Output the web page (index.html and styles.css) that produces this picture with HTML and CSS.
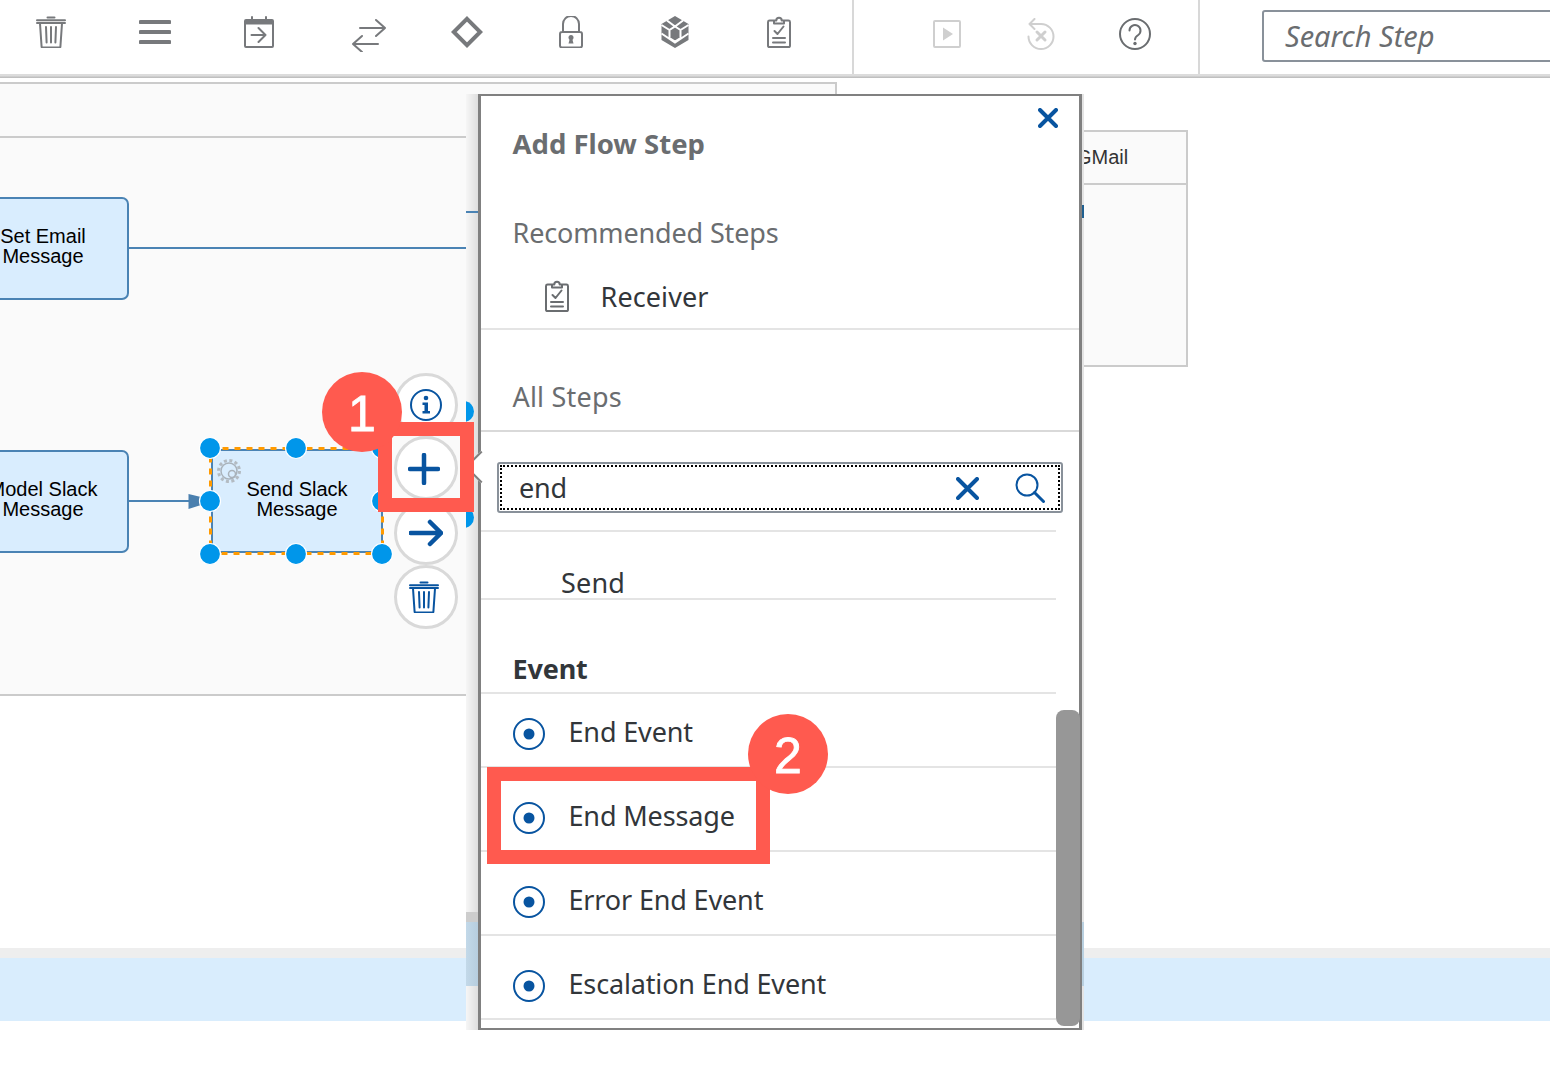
FILE: index.html
```html
<!DOCTYPE html>
<html lang="en">
<head>
<meta charset="utf-8">
<title>Add Flow Step</title>
<link rel="stylesheet" href="styles.css">
</head>
<body>
<svg class="defs" width="0" height="0" aria-hidden="true">
  <symbol id="i-trash" viewBox="0 0 32 32">
    <path class="ln" d="M12.5 1.6h7M2 4.200h28M2 7h28M5 7.500l1.600 23.300a.8.8 0 0 0 .8.700h17.200a.8.8 0 0 0 .8-.7L27 7.500M11 11l.6 15.500M16 11v15.500M21 11l-.6 15.500"/>
  </symbol>
  <symbol id="i-clip" viewBox="0 0 24 32">
    <path class="ln" d="M7 4.500H2.600A1.600 1.600 0 0 0 1 6v23.400A1.600 1.600 0 0 0 2.600 31h18.800a1.600 1.600 0 0 0 1.600-1.600V6a1.600 1.600 0 0 0-1.600-1.500H17M7 7.500h10v-3h-2.300a2.700 2.700 0 0 0-5.400 0H7zM7.500 15l3 3 6-7.500M6 22h12M6 26.500h12"/>
  </symbol>
  <symbol id="i-radio" viewBox="0 0 32 32">
    <circle class="ln" cx="16" cy="16" r="15"/>
    <circle class="fl" cx="16" cy="16" r="5.500"/>
  </symbol>
</svg>

<div class="page">
  <header class="toolbar">
    <div class="tools tools-a">
      <span class="tool"><svg class="ico" width="32" height="32"><use href="#i-trash"/></svg></span>
      <span class="tool"><svg class="ico" width="32" height="32" viewBox="0 0 32 32"><path class="bars" d="M1.500 6h29M1.500 16h29M1.500 26h29"/></svg></span>
      <span class="tool"><svg class="ico" width="32" height="32" viewBox="0 0 32 32"><path class="ln" d="M3 4h26a1 1 0 0 1 1 1v25a1 1 0 0 1-1 1H3a1 1 0 0 1-1-1V5a1 1 0 0 1 1-1zM8.500 19h14M15.500 12l7 7-7 7"/><path class="fl" d="M3 4h26v4.500H3z"/><path class="ln" d="M9 1v3M23 1v3"/></svg></span>
      <span class="tool tool-swap"><svg class="ico" width="34" height="36" viewBox="0 0 34 36"><path class="ln" d="M8 12h25M24 4l9 8-9 8M26 28H1M10 20l-9 8 9 8"/></svg></span>
      <span class="tool"><svg class="ico" width="32" height="32" viewBox="0 0 32 32"><path class="ln thick" d="M16 2.800 29.200 16 16 29.200 2.800 16z"/></svg></span>
      <span class="tool"><svg class="ico" width="32" height="32" viewBox="0 0 32 32"><path class="ln" d="M8 16V8a8 8 0 0 1 16 0v8M7 16h18a2 2 0 0 1 2 2v11.500a2 2 0 0 1-2 2H7a2 2 0 0 1-2-2V18a2 2 0 0 1 2-2z"/><circle class="fl" cx="16" cy="21.500" r="2.500"/><path class="fl" d="M15 22h2l1.500 5.500h-5z"/></svg></span>
      <span class="tool"><svg class="ico" width="32" height="32" viewBox="0 0 32 32"><path class="fl" d="M16 0 29.500 8v16L16 32 2.500 24V8z"/><path class="cut" d="M8 4.500 16 10.500 24 4.500M16 10.500l5.500 3.500v8L16 25.500 10.500 22v-8zM2.500 17.500l13.500 9 13.500-9M2.500 9l8 5M29.500 9l-8 5"/></svg></span>
      <span class="tool"><svg class="ico" width="24" height="32"><use href="#i-clip"/></svg></span>
    </div>
    <div class="tools tools-b">
      <span class="tool-b"><svg class="ico off" width="28" height="30" viewBox="0 0 28 30"><path class="ln" d="M2 3h24a1 1 0 0 1 1 1v24a1 1 0 0 1-1 1H2a1 1 0 0 1-1-1V4a1 1 0 0 1 1-1z"/><path class="fl" d="M10 9.500 20 16 10 22.500z"/></svg></span>
      <span class="tool-b"><svg class="ico off" width="28" height="32" viewBox="0 0 28 32"><path class="ln" d="M7.500 1 2.500 6l5 5M2.500 6H14a12.500 12.500 0 1 1-12.500 12.500"/><path class="ln thick3" d="m10 14 8 8M18 14l-8 8"/></svg></span>
      <span class="tool-b"><svg class="ico help" width="32" height="32" viewBox="0 0 32 32"><circle class="ln" cx="16" cy="16" r="15"/><path class="ln" d="M10.500 12.500a5.500 5.500 0 1 1 8.700 4.500c-2.200 1.500-3.200 2.300-3.200 4.500"/><circle class="fl" cx="16" cy="25.500" r="1.700"/></svg></span>
    </div>
    <div class="search-step">Search Step</div>
  </header>
  <div class="toolbar-rule"></div>

  <main class="stage">
    <div class="pool"><div class="pool-head"></div></div>
    <div class="gmail-pool"><div class="gmail-head">GMail</div></div>

    <div class="node node-email">Set Email<br>Message</div>
    <div class="node node-model">Model Slack<br>Message</div>
    <div class="node node-send">Send Slack<br>Message</div>

    <svg class="wires" width="1550" height="870" viewBox="0 78 1550 870">
      <path class="wire" d="M128 248H466M128 501H192"/>
      <path class="wire-head" d="M188.500 494 201 497v8l-12.500 4z"/>
      <rect class="sel" x="210.500" y="448.500" width="172" height="105"/>
      <g class="gear">
        <circle class="teeth" cx="229" cy="471" r="10.500"/>
        <circle class="gear-ring" cx="229" cy="471" r="8"/>
        <circle class="gear-ring" cx="232" cy="474" r="3.500"/>
      </g>
      <g class="handles">
        <circle cx="210" cy="448" r="10.500"/><circle cx="296" cy="448" r="10.500"/><circle cx="382" cy="448" r="10.500"/>
        <circle cx="210" cy="501" r="10.500"/><circle cx="382" cy="501" r="10.500"/>
        <circle cx="210" cy="554" r="10.500"/><circle cx="296" cy="554" r="10.500"/><circle cx="382" cy="554" r="10.500"/>
      </g>
    </svg>

    <button class="act act-info" type="button"><svg width="32" height="32" viewBox="0 0 32 32"><circle class="ln" cx="16" cy="16" r="15"/><circle class="fl" cx="16" cy="9" r="2.300"/><path class="fl" d="M12.500 13.500H18V22h2v2.500h-7.500V22h2v-6h-2z"/></svg></button>
    <button class="act act-add" type="button"><svg width="32" height="32" viewBox="0 0 32 32"><path class="ln thick" d="M16 2v28M2 16h28"/></svg></button>
    <button class="act act-next" type="button"><svg width="34" height="32" viewBox="0 0 34 32"><path class="ln thick" d="M1.500 16H31M21 5l11 11-11 11"/></svg></button>
    <button class="act act-del" type="button"><svg width="32" height="32"><use href="#i-trash"/></svg></button>
  </main>

  <div class="band-top"></div>
  <div class="band-blue"></div>

  <div class="shade-left">
    <i class="shade-line"></i>
    <i class="shade-dot shade-dot-a"></i>
    <i class="shade-dot shade-dot-b"></i>
    <i class="shade-gray"></i>
    <i class="shade-blue"></i>
  </div>
  <div class="shade-right">
    <i class="shade-mark"></i>
    <i class="shade-blue-r"></i>
  </div>

  <section class="popover">
    <span class="notch"></span>
    <div class="pop-body">
      <h2 class="pop-title">Add Flow Step</h2>
      <h3 class="pop-sub pop-rec">Recommended Steps</h3>
      <div class="rec-row">
        <svg class="ico rec-ico" width="24" height="32"><use href="#i-clip"/></svg>
        <span>Receiver</span>
      </div>
      <h3 class="pop-sub pop-all">All Steps</h3>
      <div class="pop-search">
        <div class="pop-search-in">
          <span class="pop-query">end</span>
          <svg class="blue" width="23" height="23" viewBox="0 0 23 23"><path class="ln thick" d="m2 2 19 19M21 2 2 21"/></svg>
          <svg class="blue" width="30" height="30" viewBox="0 0 30 30"><circle class="ln" cx="12" cy="12" r="10.500"/><path class="ln thick3" d="m19.500 19.500 9 9"/></svg>
        </div>
      </div>
      <div class="send-row">Send</div>
      <div class="event-head">Event</div>
      <ul class="steps">
        <li class="step step-first"><svg class="blue" width="32" height="32"><use href="#i-radio"/></svg><span>End Event</span></li>
        <li class="step"><svg class="blue" width="32" height="32"><use href="#i-radio"/></svg><span>End Message</span></li>
        <li class="step"><svg class="blue" width="32" height="32"><use href="#i-radio"/></svg><span>Error End Event</span></li>
        <li class="step"><svg class="blue" width="32" height="32"><use href="#i-radio"/></svg><span>Escalation End Event</span></li>
      </ul>
    </div>
    <button class="pop-close" type="button"><svg class="blue" width="20" height="20" viewBox="0 0 20 20"><path class="ln thick" d="m2 2 16 16M18 2 2 18"/></svg></button>
    <div class="pop-thumb"></div>
  </section>

  <div class="mark-box mark-box-1"></div>
  <div class="mark-box mark-box-2"></div>
  <div class="badge badge-1">1</div>
  <div class="badge badge-2">2</div>
</div>
</body>
</html>
```
FILE: styles.css
```css
* { box-sizing: border-box; }
html, body { margin: 0; padding: 0; background: #fff; }
.defs { position: absolute; }
.page {
  position: relative;
  width: 1550px;
  height: 1074px;
  overflow: hidden;
  font-family: "Noto Sans", "Open Sans", sans-serif;
  color: #32363a;
}

/* shared svg paint */
.ln { fill: none; stroke: currentColor; stroke-width: 2; stroke-linecap: round; stroke-linejoin: round; }
.ln.thick { stroke-width: 4; stroke-linejoin: miter; }
.ln.thick3 { stroke-width: 3; }
.fl { fill: currentColor; stroke: none; }
.ico { color: #77797c; display: block; }
.ico.off { color: #cfcfcf; }
.ico.help { color: #6a6d70; }
.blue { color: #0854a0; display: block; }
.bars { fill: none; stroke: currentColor; stroke-width: 4; stroke-linecap: round; }
.cut { fill: none; stroke: #fff; stroke-width: 2; stroke-linejoin: miter; }

/* toolbar */
.toolbar { display: flex; height: 74px; align-items: stretch; }
.tools { flex: none; display: flex; padding-top: 16px; border-right: 2px solid #d8d8d8; }
.tools-a { width: 855px; margin-left: -1px; }
.tools-b { width: 346px; padding-left: 46px; padding-top: 18px; }
.tool { flex: none; width: 104px; display: flex; justify-content: center; }
.tool-swap { padding-left: 11px; }
.tool-b { flex: none; width: 94px; display: flex; justify-content: center; }
.search-step {
  flex: none;
  width: 420px;
  height: 52px;
  margin: 10px 0 0 62px;
  padding-left: 21px;
  border: 2px solid #89919a;
  border-radius: 3px;
  font-size: 29px;
  font-style: italic;
  line-height: 48px;
  color: #6a6d70;
}
.toolbar-rule { height: 4px; background: linear-gradient(#dcdcdc, #dcdcdc 40%, #b8b8b8); }

/* diagram */
.stage { position: relative; height: 870px; background: #fff; }
.pool {
  position: absolute;
  left: -2px;
  top: 4px;
  width: 839px;
  height: 614px;
  background: #fafafa;
  border: 2px solid #cbcbcb;
}
.pool-head { height: 54px; border-bottom: 2px solid #cbcbcb; }
.gmail-pool {
  position: absolute;
  left: 1000px;
  top: 52px;
  width: 188px;
  height: 237px;
  background: #fafafa;
  border: 2px solid #cbcbcb;
}
.gmail-head {
  height: 53px;
  padding: 13px 0 0 74px;
  border-bottom: 2px solid #cbcbcb;
  font: 20px/24px "Liberation Sans", Arial, sans-serif;
  color: #333;
}
.node {
  position: absolute;
  display: flex;
  align-items: center;
  justify-content: center;
  padding-bottom: 5px;
  text-align: center;
  background: #d9edfe;
  border: 2px solid #4a83b4;
  border-radius: 7px;
  font: 20px/20px "Liberation Sans", Arial, sans-serif;
  color: #000;
}
.node-email { left: -43px; top: 119px; width: 172px; height: 103px; }
.node-model { left: -43px; top: 372px; width: 172px; height: 103px; }
.node-send { left: 211px; top: 371px; width: 172px; height: 104px; border-radius: 2px; }
.wires { position: absolute; left: 0; top: 0; pointer-events: none; }
.wire { fill: none; stroke: #4a83b4; stroke-width: 2; }
.wire-head { fill: #4a7fae; }
.sel { fill: none; stroke: #ff9a00; stroke-width: 3; stroke-dasharray: 6 6; }
.handles circle { fill: #0096ea; stroke: #fff; stroke-width: 1.200; }
.teeth { fill: none; stroke: #b3bbc2; stroke-width: 3; stroke-dasharray: 3 2.500; }
.gear-ring { fill: none; stroke: #a9b2ba; stroke-width: 1.500; }

.act {
  position: absolute;
  left: 394px;
  width: 64px;
  height: 64px;
  padding: 0;
  display: flex;
  align-items: center;
  justify-content: center;
  background: #fff;
  border: 3px solid #d9d9d9;
  border-radius: 50%;
  color: #0854a0;
}
.act-info { top: 295px; }
.act-add { top: 358px; padding: 2px 4px 0 0; }
.act-add .ln.thick { stroke-width: 4.500; }
.act-next { top: 423px; }
.act-del { top: 487px; padding-right: 4px; }
.act-next .ln.thick { stroke-width: 4.500; }

/* bottom bands */
.band-top { height: 10px; background: #eeeeee; }
.band-blue { height: 63px; background: #d9edfd; }

/* popover shadow slivers */
.shade-left {
  position: absolute;
  left: 466px;
  top: 94px;
  width: 13px;
  height: 936px;
  overflow: hidden;
  background: linear-gradient(90deg, #f6f6f6, #dcdcdc);
}
.shade-left i, .shade-right i { position: absolute; display: block; }
.shade-line { left: 0; top: 117px; width: 13px; height: 2px; background: #4a83b4; }
.shade-dot { left: -13px; width: 21px; height: 21px; border-radius: 50%; background: #0096ea; }
.shade-dot-a { top: 307px; }
.shade-dot-b { top: 413px; }
.shade-gray { left: 0; top: 818px; width: 13px; height: 10px; background: #cdcdcd; }
.shade-blue { left: 0; top: 828px; width: 13px; height: 64px; background: linear-gradient(90deg, #c3d9e9, #b5ccdd); }
.shade-right { position: absolute; left: 1082px; top: 94px; width: 2px; height: 936px; background: #e4e4e4; }
.shade-mark { left: 0; top: 111px; width: 2px; height: 13px; background: #1f5f90; }
.shade-blue-r { left: 0; top: 828px; width: 2px; height: 64px; background: #b9d0e0; }

/* popover */
.popover {
  position: absolute;
  left: 478px;
  top: 94px;
  width: 604px;
  height: 936px;
  background: #fff;
  border: solid #808080;
  border-width: 2px 3px;
}
.notch {
  position: absolute;
  left: -16px;
  top: 355px;
  width: 32px;
  height: 32px;
  transform: rotate(45deg) scale(.72);
  background: #fff;
  border-left: 3px solid #808080;
  border-bottom: 3px solid #808080;
}
.pop-body { position: relative; height: 100%; overflow: hidden; font-size: 27px; letter-spacing: -.15px; }
.pop-title, .pop-sub { margin: 0; padding-left: 31.500px; line-height: 40px; }
.pop-title { padding-top: 28px; height: 69px; font-size: 27.500px; letter-spacing: 0; font-weight: 700; color: #6a6d70; }
.pop-sub { font-weight: 400; font-size: 27px; color: #6a6d70; }
.pop-rec { margin-top: 48px; }
.rec-row {
  display: flex;
  gap: 31.500px;
  padding: 27px 0 15px 64px;
  line-height: 32px;
  letter-spacing: .1px;
  border-bottom: 2px solid #e4e4e4;
}
.rec-row span { padding-top: 1px; }
.rec-ico { color: #6a6d70; flex: none; }
.pop-all { margin-top: 47px; padding-bottom: 13px; height: 55px; letter-spacing: .2px; border-bottom: 2px solid #d9d9d9; }
.pop-search {
  margin: 30px 0 17px 16px;
  width: 566px;
  height: 51px;
  border: 2px solid #89919a;
  border-radius: 3px;
  padding: 1px;
}
.pop-search-in {
  display: flex;
  align-items: center;
  height: 100%;
  padding: 1px 13px 0 17px;
  border: 2px dotted #000;
}
.pop-query { flex: 1; line-height: 40px; }
.pop-search-in svg + svg { margin-left: 36px; }
.send-row {
  display: flex;
  align-items: flex-end;
  width: 575px;
  height: 70px;
  padding-left: 80px;
  line-height: 30px;
  letter-spacing: .2px;
  border-top: 2px solid #e4e4e4;
  border-bottom: 2px solid #e4e4e4;
}
.event-head {
  width: 575px;
  height: 94px;
  padding: 49px 0 0 31.500px;
  line-height: 40px;
  font-weight: 700;
  border-bottom: 2px solid #e4e4e4;
}
.steps { list-style: none; margin: 0; padding: 0; width: 575px; }
.step {
  display: flex;
  align-items: flex-end;
  gap: 23.500px;
  height: 84px;
  padding: 0 0 16px 32px;
  border-bottom: 2px solid #e4e4e4;
  line-height: 32px;
}
.step-first { height: 74px; }
.step span { padding-bottom: 2px; }
.pop-close {
  position: absolute;
  left: 557px;
  top: 12px;
  width: 20px;
  height: 20px;
  padding: 0;
  background: none;
  border: 0;
}
.pop-thumb {
  position: absolute;
  left: 575px;
  top: 614px;
  width: 24px;
  height: 316px;
  background: #979797;
  border-radius: 8px;
}

/* annotations */
.mark-box { position: absolute; border: 14px solid #ff5a4f; }
.mark-box-1 { left: 378px; top: 422px; width: 96px; height: 90px; }
.mark-box-2 { left: 487px; top: 767px; width: 283px; height: 97px; }
.badge {
  position: absolute;
  width: 80px;
  height: 80px;
  border-radius: 50%;
  background: #ff5a4f;
  color: #fff;
  text-align: center;
  font: 50px/84px "Liberation Sans", Arial, sans-serif;
  -webkit-text-stroke: .8px #fff;
}
.badge-1 { left: 322px; top: 372px; }
.badge-2 { left: 748px; top: 714px; }
```
